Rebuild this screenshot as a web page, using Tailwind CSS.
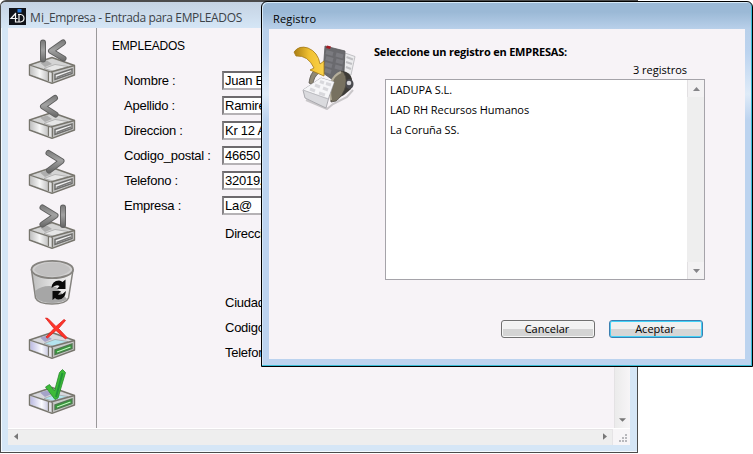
<!DOCTYPE html>
<html lang="es">
<head>
<meta charset="utf-8">
<title>Mi_Empresa</title>
<script src="https://cdn.jsdelivr.net/npm/@tailwindcss/browser@4"></script>
</head>
<body class="relative h-[454px] w-[753px] overflow-hidden bg-white text-black">

<!-- Shared drawings -->
<svg class="absolute h-0 w-0" aria-hidden="true">
  <defs>
    <linearGradient id="bar" x1="0" y1="0" x2="0" y2="24" gradientUnits="userSpaceOnUse"><stop offset="0" stop-color="#707070"/><stop offset=".5" stop-color="#a2a2a2"/><stop offset="1" stop-color="#666"/></linearGradient>
    <linearGradient id="face" x1="0" x2="1"><stop offset="0" stop-color="#c2c2c2"/><stop offset=".5" stop-color="#f7f7f7"/><stop offset="1" stop-color="#bdbdbd"/></linearGradient>
    <linearGradient id="faceBlue" x1="0" x2="1"><stop offset="0" stop-color="#bcbbe2"/><stop offset=".6" stop-color="#fbfbff"/><stop offset="1" stop-color="#c4c4dd"/></linearGradient>
    <linearGradient id="bin" x1="0" x2="1"><stop offset="0" stop-color="#bdbdbd"/><stop offset=".5" stop-color="#e2e2e2"/><stop offset="1" stop-color="#f2f0f0"/></linearGradient>
    <linearGradient id="gold" x1="0" x2="1"><stop offset="0" stop-color="#a87c14"/><stop offset=".5" stop-color="#f0c030"/><stop offset="1" stop-color="#fbd24c"/></linearGradient>
    <symbol id="drive" viewBox="0 0 48 46">
      <path d="M1.500 27 24 19.500 46.500 27.500V37L24 45.300 1.500 37Z" fill="#c9c9c9" stroke="#77756d" stroke-width="1.400" stroke-linejoin="round"/>
      <path d="M5 27 24 21 43 27.500 24 33.500Z" fill="#d4d4d4"/>
      <path d="M12 24.500 19 22.500 24 26 17 29Z" fill="#adadad"/>
      <path d="M16 30.500 27 26.500 40 28.500 25 33Z" fill="#e6e6e6" stroke="#999" stroke-width=".6"/>
      <path d="M2.500 28.300 21 34.500V43L2.500 36.300Z" fill="url(#face)"/>
      <path d="M1.500 27 23 34 46.500 27.500M20.500 33.500V43M24.500 34.500V44.500" fill="none" stroke="#77756d" stroke-width="1.300"/>
      <path d="M22 34.500V43.500" stroke="#f5f5f5" stroke-width="1.200"/>
      <path d="M27 36.500 44 31V35.500L27 41.500Z" fill="#f0f0f0" stroke="#6e6e6c" stroke-width="1.500"/>
      <path d="M28.500 39.500 43 34" stroke="#777" stroke-width="1.400"/>
    </symbol>
    <symbol id="driveColor" viewBox="0 0 48 46">
      <path d="M1.500 27 24 19.500 46.500 27.500V37L24 45.300 1.500 37Z" fill="#c9c9c9" stroke="#77756d" stroke-width="1.400" stroke-linejoin="round"/>
      <path d="M5 27 24 21 43 27.500 24 33.500Z" fill="#d8d8de"/>
      <path d="M12 24.500 19 22.500 24 26 17 29Z" fill="#a5a3c8"/>
      <path d="M16 30.500 27 26.500 40 28.500 25 33Z" fill="#b4e4ee" stroke="#999" stroke-width=".6"/>
      <path d="M2.500 28.300 21 34.500V43L2.500 36.300Z" fill="url(#faceBlue)"/>
      <path d="M1.500 27 23 34 46.500 27.500M20.500 33.500V43M24.500 34.500V44.500" fill="none" stroke="#77756d" stroke-width="1.300"/>
      <path d="M22 34.500V43.500" stroke="#f5f5ff" stroke-width="1.200"/>
      <path d="M27 37 44 31V35.500L27 41.500Z" fill="#2f9f36" stroke="#4f7a50" stroke-width="1.400"/>
      <path d="M29 39 42.500 34" stroke="#c8f0c4" stroke-width="1.100"/>
    </symbol>
  </defs>
</svg>

<!-- Main window -->
<section class="absolute top-0 left-0 flex h-[453px] w-[638px] flex-col overflow-hidden rounded-tl-[6px] border border-t-2 border-[#4b4b4b] bg-[#d5e6f6] pr-[7px] pb-[7px] pl-[7px] shadow-[inset_1px_-1px_0_#f4fafe]">
  <header class="-mx-[7px] flex h-[26px] shrink-0 items-center bg-linear-to-b from-[#c5d3e3] to-[#d5e6f6] pt-[3px] pl-[8px]">
    <svg class="h-[17px] w-[17px] shrink-0" viewBox="0 0 17 17"><path d="M0 0H17V17H0Z" fill="#10131a"/><path d="M8.500 1H12.500V4.500H8.500Z" fill="#2878d8"/><path d="M7 5 2 10.500H8.500M6.500 6V14.500M9 6.500H11.500Q15 7 15 10.300T11.500 14H6.500M10 7V14" fill="none" stroke="#f5f5f5" stroke-width="1.200"/></svg>
    <h1 class="mt-[2px] ml-[4px] font-['Open_Sans',sans-serif] text-[12px] leading-[16px] tracking-[-0.37px] whitespace-nowrap text-[#3c4248]"><span class="tracking-[0.1px]">Mi</span>_Empresa - Entrada para EMPLEADOS</h1>
  </header>
  <div class="flex min-h-0 flex-1 bg-[#f7f3f7]">
    <nav class="flex w-[89px] shrink-0 flex-col gap-[9px] border-r border-[#9a989a] pt-[10px] pl-[20px]">
      <svg class="h-[46px] w-[48px] shrink-0" viewBox="0 0 48 46"><use href="#drive"/><g fill="none" stroke-linecap="round" stroke-linejoin="round"><path d="M15 4.500V21.500M35 4.500 23 13 35.500 20.500" stroke="#606060" stroke-width="6"/><path d="M15 4.500V21.500M35 4.500 23 13 35.500 20.500" stroke="url(#bar)" stroke-width="4.200"/></g></svg>
      <svg class="h-[46px] w-[48px] shrink-0" viewBox="0 0 48 46"><use href="#drive"/><g fill="none" stroke-linecap="round" stroke-linejoin="round"><path d="M27 5 15 13.500 27.500 21.500" stroke="#606060" stroke-width="6"/><path d="M27 5 15 13.500 27.500 21.500" stroke="url(#bar)" stroke-width="4.200"/></g></svg>
      <svg class="h-[46px] w-[48px] shrink-0" viewBox="0 0 48 46"><use href="#drive"/><g fill="none" stroke-linecap="round" stroke-linejoin="round"><path d="M20.500 5 33.500 13 21 22.500" stroke="#606060" stroke-width="6"/><path d="M20.500 5 33.500 13 21 22.500" stroke="url(#bar)" stroke-width="4.200"/></g></svg>
      <svg class="h-[46px] w-[48px] shrink-0" viewBox="0 0 48 46"><use href="#drive"/><g fill="none" stroke-linecap="round" stroke-linejoin="round"><path d="M14.500 4.500 27.500 12.500 14.500 21.500M35 4.500V22" stroke="#606060" stroke-width="6"/><path d="M14.500 4.500 27.500 12.500 14.500 21.500M35 4.500V22" stroke="url(#bar)" stroke-width="4.200"/></g></svg>
      <svg class="h-[46px] w-[48px] shrink-0 overflow-visible" viewBox="0 0 48 46">
        <path d="M3.500 12 7.500 40Q10 46 24 46T40.500 40L45 12Z" fill="url(#bin)" stroke="#85837f" stroke-width="1.500"/>
        <path d="M7 33Q16 26 28 29L39 41Q35 45 24 45T8.500 40Z" fill="#a6a6a6"/>
        <ellipse cx="24.300" cy="11.500" rx="20.800" ry="8.700" fill="#d0cfcf" stroke="#85837f" stroke-width="1.700"/>
        <path d="M6 12Q9 5 24 4.500T42.500 12Q36 18 24 18.500T6 12Z" fill="#c1c0c0"/>
        <g fill="#0a0a0a"><path d="M23.500 30Q24 22.500 31 22.500 33 22.500 34.500 24L37.500 21.500V31H29L31.500 28Q28 26 23.500 30Z"/><path d="M38 33Q37 41.500 30.500 41.500 28.500 41.500 27 40L24.500 42V33H33L30 36.500Q34 37.500 38 33Z"/></g>
      </svg>
      <svg class="h-[46px] w-[48px] shrink-0" viewBox="0 0 48 46"><use href="#driveColor"/><path d="M17.500 5 20 5.500 28 13.500 36 6.500 37.500 7.500 30.500 15.500 39 24.500 37.500 26 28 17.500 19.500 25 18 24 26 15.500Z" fill="#ff342a" stroke="#dd1f1c" stroke-width=".8"/></svg>
      <svg class="h-[46px] w-[48px] shrink-0" viewBox="0 0 48 46"><use href="#driveColor"/><path d="M17.500 19 21.500 16.500 26.500 23 31.500 4.500 34.500 1.500 37.500 4.500 30 30 27 31.500Z" fill="#3dbb38" stroke="#268a2b" stroke-width=".8"/><path d="M28 29 34.500 5" stroke="#23953a" stroke-width="2"/></svg>
    </nav>
    <main class="flex-1 pt-[10px] pl-[15px] font-['Liberation_Sans',Arial,sans-serif] text-[13px] leading-[17px] tracking-[-0.25px] whitespace-nowrap">
      <h2 class="text-[12px] tracking-[-0.2px]">EMPLEADOS</h2>
      <div class="mt-[16px] grid grid-cols-[98px_90px] auto-rows-[19px] gap-y-[6px] pl-[12px]">
        <label class="pt-px">Nombre :</label><div class="border-2 border-t-[#6d6a6d] border-r-[#b5b2b5] border-b-[#b5b2b5] border-l-[#858285] bg-white pl-px leading-[15px]">Juan E</div>
        <label class="pt-px">Apellido :</label><div class="border-2 border-t-[#6d6a6d] border-r-[#b5b2b5] border-b-[#b5b2b5] border-l-[#858285] bg-white pl-px leading-[15px]">Ramirez</div>
        <label class="pt-px">Direccion :</label><div class="border-2 border-t-[#6d6a6d] border-r-[#b5b2b5] border-b-[#b5b2b5] border-l-[#858285] bg-white pl-px leading-[15px]">Kr 12 A</div>
        <label class="pt-px">Codigo_postal :</label><div class="border-2 border-t-[#6d6a6d] border-r-[#b5b2b5] border-b-[#b5b2b5] border-l-[#858285] bg-white pl-px leading-[15px]">46650</div>
        <label class="pt-px">Telefono :</label><div class="border-2 border-t-[#6d6a6d] border-r-[#b5b2b5] border-b-[#b5b2b5] border-l-[#858285] bg-white pl-px leading-[15px]">320192</div>
        <label class="pt-px">Empresa :</label><div class="border-2 border-t-[#6d6a6d] border-r-[#b5b2b5] border-b-[#b5b2b5] border-l-[#858285] bg-white pl-px leading-[15px]">La@</div>
      </div>
      <div class="pt-[10px] pl-[113px] leading-[17px]">
        <p>Direccion</p>
        <p class="mt-[52px]">Ciudad</p>
        <p class="mt-[8px]">Codigo</p>
        <p class="mt-[8px]">Telefono</p>
      </div>
    </main>
    <div class="flex w-[16px] shrink-0 flex-col justify-end border-l border-[#e4e2e4] bg-linear-to-r from-[#ebebeb] via-[#f1f0f1] to-[#f7f5f7] pb-[6px] pl-[4px]">
      <svg class="h-[4px] w-[7px]" viewBox="0 0 8 4"><path d="M0 0H8L4 4Z" fill="#777"/></svg>
    </div>
  </div>
  <footer class="flex h-[17px] shrink-0 border-t border-white bg-[#f7f5f7]">
    <div class="flex w-[605px] items-center justify-between border-t border-r border-[#e6e4e6] bg-[#eeeeee] pr-[5px] pb-[3px] pl-[6px]">
      <svg class="h-[7px] w-[4px]" viewBox="0 0 5 8"><path d="M5 0V8L0 4Z" fill="#777"/></svg>
      <svg class="h-[7px] w-[4px]" viewBox="0 0 5 8"><path d="M0 0V8L5 4Z" fill="#777"/></svg>
    </div>
    <svg class="mt-[5px] ml-[6px] h-[9px] w-[9px]" viewBox="0 0 9 9"><path d="M6 0H8V2H6ZM3 3H5V5H3ZM6 3H8V5H6ZM0 6H2V8H0ZM3 6H5V8H3ZM6 6H8V8H6Z" fill="#b8b8bc"/></svg>
  </footer>
</section>

<!-- Record picker dialog -->
<section class="absolute top-px left-[261px] flex h-[366px] w-[492px] flex-col rounded-t-[6px] border border-black bg-[linear-gradient(to_bottom,#9bb9d6_0,#9bb9d6_10px,#b9d0ea_27px,#bcd3ef_50px,#dfebf8_92px,#bcd3ef_118px)] px-[7px] pb-[7px] font-['Open_Sans',sans-serif] text-[11px] leading-[16px] whitespace-nowrap shadow-[inset_-1px_-1px_0_#39bdd6,inset_1px_1px_0_#d5e8f6]">
  <header class="h-[27px] shrink-0 pt-[9px] pl-[4px]"><h2 class="tracking-[0.15px]">Registro</h2></header>
  <div class="min-h-0 flex-1 bg-[#f7f3f7] pr-[40px] pl-[24px]">
    <div class="flex h-[50px]">
      <svg class="mt-[13px] h-[68px] w-[64px] shrink-0" viewBox="0 0 64 68">
        <path d="M13 58 34 67 40 62 54 55 60 48" fill="none" stroke="#9c999c" stroke-width="2" opacity=".5"/>
        <path d="M52 11 62 14.500 58 33 49 31Z" fill="#ececee" stroke="#b4b4b8" stroke-width=".8"/>
        <path d="M53.500 15 60 17.500M53 20 59 22M53 25 58 27" stroke="#c0c0c4" stroke-width="2"/>
        <path d="M32 4 52 9 51 30 40 38 30 31Z" fill="#6a6a6e" stroke="#58585a" stroke-width=".8"/>
        <path d="M33 10 40 12M43 12.500 50 14.500M33 16 40 18M43 18.500 50 20.500M32 22 39 24M42 24.500 49 26.500M32 28 38 30" stroke="#7b7b80" stroke-width="4"/>
        <path d="M34 3.500 38 4.500 37 7 33 6Z" fill="#a71922"/>
        <path d="M16 41Q17 31 23 27L27 30Q20 35 20 43Z" fill="#8e8774" stroke="#55524a" stroke-width=".8"/>
        <path d="M40 59Q38 31 50 29 57 30 59 37L58 47 51 53Z" fill="#3d3b37"/>
        <path d="M38 60Q34 35 49 29 54 33 53 43 50 54 43 59Z" fill="#777160" stroke="#4f4b42" stroke-width=".8"/>
        <path d="M38 58Q34 36 48 30" fill="none" stroke="#b5ae9b" stroke-width="2"/>
        <ellipse cx="56.500" cy="42" rx="4" ry="5" fill="#4b4b50"/><circle cx="56" cy="41" r="2.300" fill="#d4d4d8"/>
        <path d="M10 48 28 36 41 40 36 55 33 66 12 56Z" fill="#dadade" stroke="#a3a3a8" stroke-width=".9"/>
        <path d="M10 48 28 36 41 40 35 56Z" fill="#f6f6f8"/>
        <path d="M10 48 35 57" fill="none" stroke="#bcbcc1"/>
        <path d="M27 39.500 31 41M33 41.500 38 43M22 43 27 45M30 46 35 48M17 47 22 49M26 51 32 53" stroke="#d8d8dc" stroke-width="3"/>
        <path d="M1 10Q6 3 15 6 25 10 27 22L31 19V34L17 28 21 26Q15 13 3 14Z" fill="url(#gold)" stroke="#a37918" stroke-width=".8" stroke-linejoin="round"/>
      </svg>
      <div class="flex flex-1 flex-col pl-[17px]">
        <h3 class="pt-[15px] text-[11px] leading-[16px] font-bold tracking-[-0.2px]">Seleccione un registro en EMPRESAS:</h3>
        <p class="mt-[2px] pr-[18px] text-right">3 registros</p>
      </div>
    </div>
    <div class="ml-[92px] flex h-[201px] w-[320px] border border-[#a5a3a9] bg-white">
      <ul class="flex-1 pl-[4px] leading-[20px] tracking-[-0.06px]">
        <li>LADUPA S.L.</li>
        <li>LAD RH Recursos Humanos</li>
        <li>La Coruña SS.</li>
      </ul>
      <div class="flex w-[17px] flex-col justify-between bg-[#eeeeee]">
        <div class="flex h-[17px] items-center justify-center border-l border-[#e2e0e2] bg-[#f3f2f3]"><svg class="h-[4px] w-[7px]" viewBox="0 0 7 4"><path d="M0 4H7L3.500 0Z" fill="#858588"/></svg></div>
        <div class="flex h-[17px] items-center justify-center border-l border-[#e2e0e2] bg-[#f3f2f3]"><svg class="h-[4px] w-[7px]" viewBox="0 0 7 4"><path d="M0 0H7L3.500 4Z" fill="#858588"/></svg></div>
      </div>
    </div>
    <div class="mt-[40px] flex justify-end gap-[14px] pr-[2px]">
      <button class="h-[18px] w-[94px] rounded-[3px] border border-[#707070] bg-linear-to-b from-[#f2f2f2] from-50% to-[#d4d4d4] to-50% pr-[2px] leading-[14px] shadow-[inset_0_0_0_1px_#f6f6f6]">Cancelar</button>
      <button class="h-[18px] w-[94px] rounded-[3px] border border-[#3c7fb1] bg-linear-to-b from-[#f0f0f0] from-50% to-[#d6d6d6] to-50% pr-[2px] leading-[14px] shadow-[inset_0_0_0_1px_#42d2f8]">Aceptar</button>
    </div>
  </div>
</section>
</body>
</html>
